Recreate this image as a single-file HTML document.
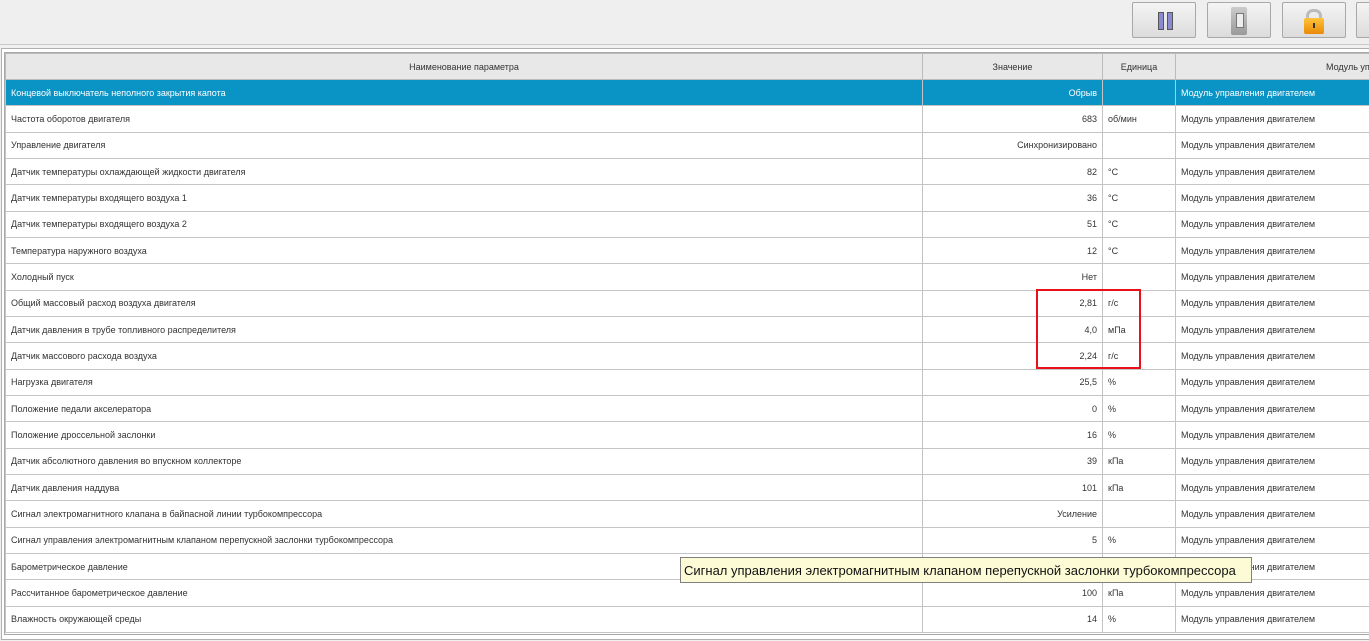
<!DOCTYPE html>
<html><head><meta charset="utf-8"><style>
body{margin:0;width:1369px;height:641px;overflow:hidden;background:#f0f0f0;font-family:"Liberation Sans",sans-serif;position:relative}
.tb{position:absolute;left:0;top:0;width:1369px;height:44px;background:#efefef;border-bottom:1px solid #c8c8c8}
.btn{position:absolute;top:2px;width:64px;height:36px;border:1px solid #a8a8a8;border-radius:2px;background:linear-gradient(#f4f4f4,#dcdcdc);box-sizing:border-box}
.frame{position:absolute;left:1px;top:48px;width:1380px;height:590px;border:1px solid #b0b0b0;border-right:none;background:#fff}
.inner{position:absolute;left:2px;top:3px;right:0;bottom:4px;border:1px solid #a8a8a8;border-right:none}
table{border-collapse:collapse;font-size:9px;color:#333;table-layout:fixed;width:1400px}
td{border:1px solid #c4c4c4;height:26.33px;padding:0 5px;white-space:nowrap;overflow:hidden;box-sizing:border-box}
tr.h td{background:#e8e8e8;text-align:center;height:26px;border-color:#bbb}
tr.sel td{background:#0a93c5;color:#fff}
td.v{text-align:right}
.red{position:absolute;left:1036px;top:289px;width:101px;height:76px;border:2px solid #e8101a}
.tip{position:absolute;left:680px;top:557px;width:572px;height:26px;background:#fdfbd6;border:1px solid #808080;font-size:13px;line-height:26px;padding-left:3px;box-sizing:border-box;color:#111}
</style></head><body>
<div class="tb">
<div class="btn" style="left:1132px"><div style="position:absolute;left:25px;top:9px;width:4px;height:16px;background:#8a8ad0;border:1px solid #555"></div><div style="position:absolute;left:34px;top:9px;width:4px;height:16px;background:#8a8ad0;border:1px solid #555"></div></div>
<div class="btn" style="left:1207px"><div style="position:absolute;left:23px;top:4px;width:16px;height:28px;background:linear-gradient(#ccc,#999);border-radius:2px"><div style="position:absolute;left:5px;top:6px;width:6px;height:13px;background:#eee;border:1px solid #777"></div></div></div>
<div class="btn" style="left:1282px"><div style="position:absolute;left:23px;top:6px;width:10px;height:10px;border:3px solid #bbb;border-bottom:none;border-radius:7px 7px 0 0"></div><div style="position:absolute;left:21px;top:15px;width:20px;height:16px;background:linear-gradient(#fdc33a,#e98a07);border-radius:2px"><div style="position:absolute;left:9px;top:5px;width:2px;height:5px;background:#333"></div></div></div>
<div class="btn" style="left:1356px"></div>
</div>
<div class="frame"><div class="inner">
<table>
<colgroup><col style="width:917px"><col style="width:180px"><col style="width:73px"><col style="width:230px"></colgroup>
<tr class="h"><td>Наименование параметра</td><td>Значение</td><td>Единица</td><td style="text-align:left;padding-left:150px">Модуль управления</td></tr>
<tr class="sel"><td>Концевой выключатель неполного закрытия капота</td><td class="v">Обрыв</td><td></td><td>Модуль управления двигателем</td></tr>
<tr><td>Частота оборотов двигателя</td><td class="v">683</td><td>об/мин</td><td>Модуль управления двигателем</td></tr>
<tr><td>Управление двигателя</td><td class="v">Синхронизировано</td><td></td><td>Модуль управления двигателем</td></tr>
<tr><td>Датчик температуры охлаждающей жидкости двигателя</td><td class="v">82</td><td>°C</td><td>Модуль управления двигателем</td></tr>
<tr><td>Датчик температуры входящего воздуха 1</td><td class="v">36</td><td>°C</td><td>Модуль управления двигателем</td></tr>
<tr><td>Датчик температуры входящего воздуха 2</td><td class="v">51</td><td>°C</td><td>Модуль управления двигателем</td></tr>
<tr><td>Температура наружного воздуха</td><td class="v">12</td><td>°C</td><td>Модуль управления двигателем</td></tr>
<tr><td>Холодный пуск</td><td class="v">Нет</td><td></td><td>Модуль управления двигателем</td></tr>
<tr><td>Общий массовый расход воздуха двигателя</td><td class="v">2,81</td><td>г/с</td><td>Модуль управления двигателем</td></tr>
<tr><td>Датчик давления в трубе топливного распределителя</td><td class="v">4,0</td><td>мПа</td><td>Модуль управления двигателем</td></tr>
<tr><td>Датчик массового расхода воздуха</td><td class="v">2,24</td><td>г/с</td><td>Модуль управления двигателем</td></tr>
<tr><td>Нагрузка двигателя</td><td class="v">25,5</td><td>%</td><td>Модуль управления двигателем</td></tr>
<tr><td>Положение педали акселератора</td><td class="v">0</td><td>%</td><td>Модуль управления двигателем</td></tr>
<tr><td>Положение дроссельной заслонки</td><td class="v">16</td><td>%</td><td>Модуль управления двигателем</td></tr>
<tr><td>Датчик абсолютного давления во впускном коллекторе</td><td class="v">39</td><td>кПа</td><td>Модуль управления двигателем</td></tr>
<tr><td>Датчик давления наддува</td><td class="v">101</td><td>кПа</td><td>Модуль управления двигателем</td></tr>
<tr><td>Сигнал электромагнитного клапана в байпасной линии турбокомпрессора</td><td class="v">Усиление</td><td></td><td>Модуль управления двигателем</td></tr>
<tr><td>Сигнал управления электромагнитным клапаном перепускной заслонки турбокомпрессора</td><td class="v">5</td><td>%</td><td>Модуль управления двигателем</td></tr>
<tr><td>Барометрическое давление</td><td class="v"></td><td></td><td>Модуль управления двигателем</td></tr>
<tr><td>Рассчитанное барометрическое давление</td><td class="v">100</td><td>кПа</td><td>Модуль управления двигателем</td></tr>
<tr><td>Влажность окружающей среды</td><td class="v">14</td><td>%</td><td>Модуль управления двигателем</td></tr>
</table>
</div></div>
<div class="red"></div>
<div class="tip">Сигнал управления электромагнитным клапаном перепускной заслонки турбокомпрессора</div>
</body></html>
